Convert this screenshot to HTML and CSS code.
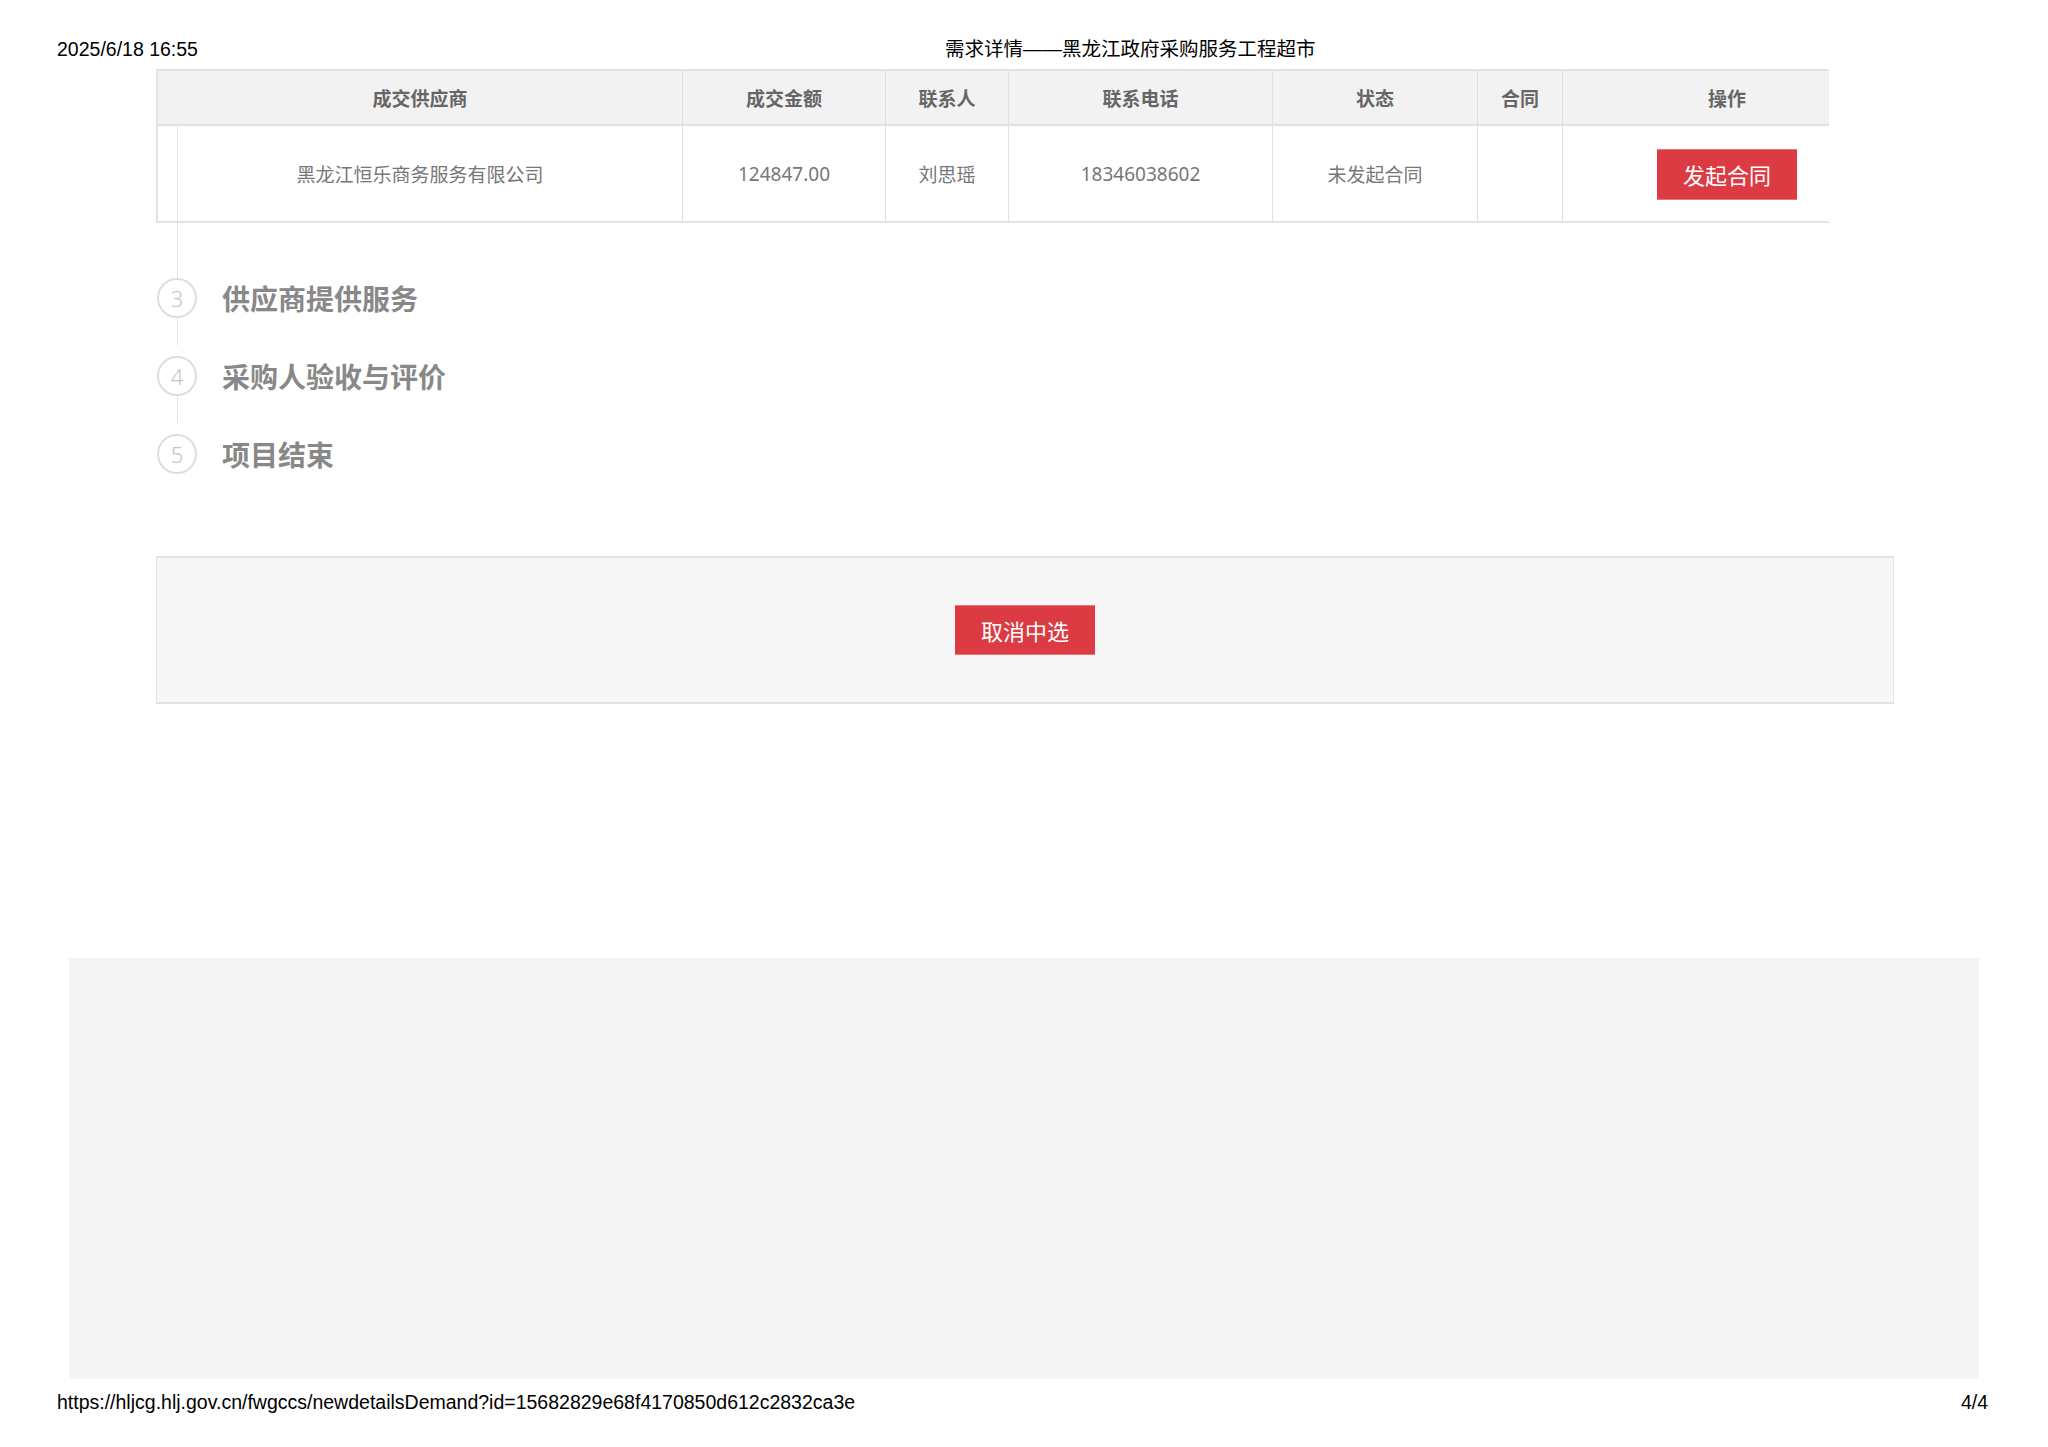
FILE: index.html
```html
<!DOCTYPE html>
<html lang="zh-CN">
<head>
<meta charset="utf-8">
<title>需求详情——黑龙江政府采购服务工程超市</title>
<link rel="stylesheet" href="styles.css">
</head>
<body>
<header class="print-head">
  <div class="print-date">2025/6/18 16:55</div>
  <div class="print-title">需求详情——黑龙江政府采购服务工程超市</div>
</header>

<main class="content">
  <div class="deal-table">
    <div class="row head">
      <div class="cell first">成交供应商</div>
      <div class="cell">成交金额</div>
      <div class="cell">联系人</div>
      <div class="cell">联系电话</div>
      <div class="cell">状态</div>
      <div class="cell">合同</div>
      <div class="cell last">操作</div>
    </div>
    <div class="row body">
      <div class="cell first with-line">黑龙江恒乐商务服务有限公司</div>
      <div class="cell">124847.00</div>
      <div class="cell">刘思瑶</div>
      <div class="cell">18346038602</div>
      <div class="cell">未发起合同</div>
      <div class="cell"></div>
      <div class="cell last"><button class="btn-red btn-contract">发起合同</button></div>
    </div>
  </div>

  <div class="connector top"></div>

  <ol class="steps">
    <li class="step">
      <div class="step-line">
        <span class="circle">3</span>
        <span class="step-title">供应商提供服务</span>
      </div>
      <div class="connector"></div>
    </li>
    <li class="step">
      <div class="step-line">
        <span class="circle">4</span>
        <span class="step-title">采购人验收与评价</span>
      </div>
      <div class="connector"></div>
    </li>
    <li class="step">
      <div class="step-line">
        <span class="circle">5</span>
        <span class="step-title">项目结束</span>
      </div>
    </li>
  </ol>

  <section class="action-box">
    <button class="btn-red btn-cancel">取消中选</button>
  </section>
</main>

<div class="gray-block"></div>

<footer class="print-foot">
  <div class="print-url">https://hljcg.hlj.gov.cn/fwgccs/newdetailsDemand?id=15682829e68f4170850d612c2832ca3e</div>
  <div class="print-page">4/4</div>
</footer>
</body>
</html>
```

FILE: styles.css
```css
* { box-sizing: border-box; }

html, body {
  margin: 0;
  padding: 0;
  background: #ffffff;
  width: 2048px;
  height: 1447px;
  overflow: hidden;
}

body {
  font-family: "Noto Sans", "Noto Sans CJK SC", sans-serif;
  color: #666;
}

/* print header */
.print-head {
  display: grid;
  grid-template-columns: 945px 1fr;
  padding-top: 37px;
  height: 61px;
  font-family: "Liberation Sans", "Noto Sans CJK SC", sans-serif;
  font-size: 19.5px;
  line-height: 24px;
  color: #000;
}
.print-date { padding-left: 57px; }
.print-title { white-space: nowrap; }

.content {
  padding-left: 156px;
  margin-top: 8px;
}

/* table */
.deal-table {
  width: 1673px;
  border-left: 2px solid #e2e2e2;
}
.row {
  display: grid;
  grid-template-columns: 524px 203px 123px 264px 205px 85px 267px;
}
.row.head {
  height: 57px;
  background: #f2f2f2;
  border-top: 2px solid #e2e2e2;
  border-bottom: 2px solid #e2e2e2;
  font-weight: 700;
  color: #666;
}
.row.body {
  height: 97px;
  border-bottom: 2px solid #e2e2e2;
  color: #777;
}
.cell {
  display: flex;
  align-items: center;
  justify-content: center;
  font-size: 19px;
  border-left: 1px solid #e0e0e0;
  white-space: nowrap;
}
.cell.first { border-left: none; }
.cell.last { padding-left: 62px; }
.cell.with-line {
  background: linear-gradient(#e3e3e3, #e3e3e3) no-repeat 19px 0 / 1px 100%;
}

.btn-red {
  background: #dc3b43;
  color: #fff;
  border: none;
  border-bottom: 1px solid #e8757a;
  border-top: 1px solid #e8757a;
  font-family: "Noto Sans CJK SC", "Noto Sans", sans-serif;
  font-size: 22px;
  padding: 0;
  cursor: pointer;
}
.btn-contract {
  width: 140px;
  height: 51px;
  margin-top: 1px;
}

/* steps */
.connector {
  width: 1px;
  background: #e3e3e3;
  margin-left: 21px;
  height: 27px;
  margin-bottom: 11px;
}
.connector.top {
  height: 55px;
  margin-bottom: 0;
}

.steps {
  list-style: none;
  margin: 0;
  padding: 0;
}
.step-line {
  display: flex;
  align-items: center;
  height: 40px;
}
.circle {
  width: 40px;
  height: 40px;
  margin-left: 1px;
  border: 2px solid #dedede;
  border-radius: 50%;
  display: flex;
  align-items: center;
  justify-content: center;
  font-family: "Noto Sans", sans-serif;
  font-weight: 300;
  font-size: 22px;
  color: #c4c4c4;
}
.step-title {
  margin-left: 25px;
  font-family: "Noto Sans CJK SC", "Noto Sans", sans-serif;
  font-size: 28px;
  font-weight: 700;
  color: #888;
  white-space: nowrap;
}

/* action box */
.action-box {
  margin-top: 82px;
  width: 1738px;
  height: 148px;
  background: #f7f7f7;
  border-top: 2px solid #e2e2e2;
  border-bottom: 2px solid #e2e2e2;
  border-left: 1px solid #e6e6e6;
  border-right: 1px solid #e6e6e6;
  display: flex;
  align-items: center;
  justify-content: center;
}
.btn-cancel {
  width: 140px;
  height: 50px;
}

/* gray block */
.gray-block {
  margin-top: 254px;
  margin-left: 69px;
  width: 1910px;
  height: 421px;
  background: #f4f4f4;
}

/* print footer */
.print-foot {
  display: flex;
  justify-content: space-between;
  padding: 0 60px 0 57px;
  margin-top: 11px;
  font-family: "Liberation Sans", sans-serif;
  font-size: 19.5px;
  line-height: 24px;
  color: #000;
}
```
